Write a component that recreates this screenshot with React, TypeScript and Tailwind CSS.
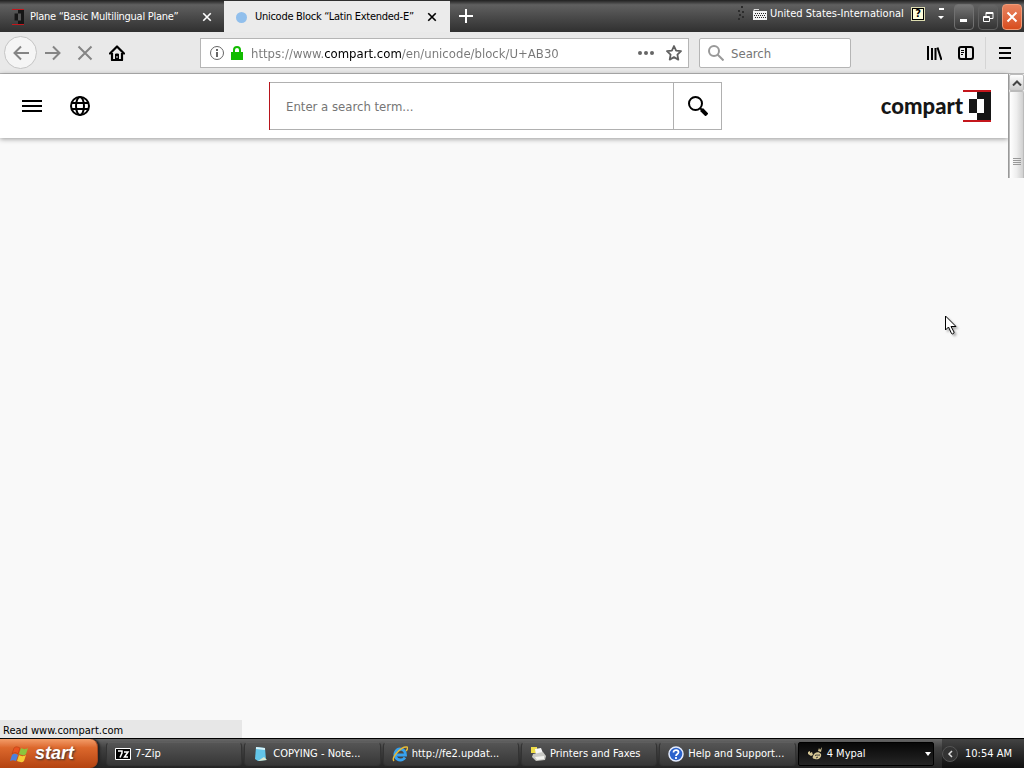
import React from "react";

const ui = "font-['DejaVu_Sans_Condensed','DejaVu_Sans',sans-serif]";

function CompartMark({ className, dark = false }: { className: string; dark?: boolean }) {
  return (
    <svg viewBox="0 0 28 32" className={className} preserveAspectRatio="none" aria-hidden="true">
      <path d="M14 2h14v28H14z" fill="#161616" />
      <path d="M6 9h8v14H6z" fill="#161616" />
      <path d="M14 9h7v14h-7z" fill={dark ? "#555" : "#fff"} />
      <path d="M0 0h28v2H0zM0 30h28v2H0z" fill="#c4161c" />
    </svg>
  );
}

function CloseGlyph({ className }: { className: string }) {
  return (
    <svg viewBox="0 0 12 12" className={className} fill="none" stroke="currentColor" strokeWidth="2" aria-hidden="true">
      <path d="M1.5 1.5l9 9M10.5 1.5l-9 9" />
    </svg>
  );
}

function TabStrip() {
  return (
    <header className="flex h-8 shrink-0 bg-linear-to-b from-[#202020] via-[#606060] via-15% to-[#303030] text-[11px] text-white">
      <div className="flex w-56 items-center pt-0.5 pl-3">
        <CompartMark dark className="mr-1.5 h-4 w-3" />
        <span className="flex-1 whitespace-nowrap tracking-tight">Plane “Basic Multilingual Plane”</span>
        <button aria-label="Close tab" className="mr-[11px] p-px"><CloseGlyph className="size-2.5" /></button>
      </div>
      <div className="flex w-[226px] items-center border-t border-[#303030] bg-[#ebebeb] pt-px pl-3 text-black">
        <span className="mr-2 size-[11px] rounded-full bg-[#91bfec]" />
        <span className="flex-1 whitespace-nowrap tracking-tight">Unicode Block “Latin Extended-E”</span>
        <button aria-label="Close tab" className="mr-3 p-px"><CloseGlyph className="size-2.5" /></button>
      </div>
      <button aria-label="New tab" className="flex w-8 items-center justify-center">
        <svg viewBox="0 0 14 14" className="size-3.5" stroke="currentColor" strokeWidth="2"><path d="M7 0v14M0 7h14" /></svg>
      </button>
      <div className="ml-auto flex">
        <div className="flex h-7 items-center">
          <svg viewBox="0 0 8 16" className="mr-2 h-4 w-2" fill="#2c2c2c"><path d="M4 0h2v2H4zM1 4h2v2H1zM5 5h2v2H5zM2 8h2v2H2zM5 10h2v2H5zM1 12h2v2H1z" /></svg>
          <svg viewBox="0 0 14 12" className="mr-[3px] h-3 w-3.5">
            <path d="M0 3h14v9H0z" fill="#f2f2f2" />
            <path d="M2 5.500h11M1 7.500h12M2 9.500h11" stroke="#222" strokeDasharray="1 1" />
            <path d="M1 3V1.500h5" stroke="#ddd" fill="none" />
          </svg>
          <span className="w-[132px] whitespace-nowrap">United States-International</span>
          <button aria-label="Help" className="ml-2.5 flex size-3 items-center justify-center border border-black bg-[#ffffdc] text-[11px] font-bold text-black outline outline-[#dcdcb0]">?</button>
          <button aria-label="Language bar options" className="mr-3.5 ml-3.5">
            <svg viewBox="0 0 6 14" className="h-3.5 w-1.5" fill="#fff"><path d="M1 1h5v2H1zM0 9h6l-3 3z" /></svg>
          </button>
        </div>
        <div className="-ml-1 flex h-[30px] items-center gap-1 pt-1 pr-0.5">
          <button aria-label="Minimize" className="flex h-[26px] w-5 items-center justify-center rounded-sm border border-[#707070] bg-linear-to-b from-[#777] to-[#343434]">
            <svg viewBox="0 0 12 12" className="size-3"><path d="M2 8h7v3H2z" fill="#fff" /></svg>
          </button>
          <button aria-label="Restore" className="flex h-[26px] w-5 items-center justify-center rounded-sm border border-[#606060] bg-linear-to-b from-[#666] to-[#343434]">
            <svg viewBox="0 0 12 12" className="size-3" fill="none" stroke="#fff"><path d="M4 5V1.500h7v6H8M1.500 5.500h6v5h-6zM4 2.500h7M1 6.500h7" /></svg>
          </button>
          <button aria-label="Close" className="flex h-[26px] w-5 items-center justify-center rounded-sm border border-[#f09a76] bg-linear-to-b from-[#e8835e] to-[#d84c1c]">
            <CloseGlyph className="size-3" />
          </button>
        </div>
      </div>
    </header>
  );
}

function Toolbar() {
  return (
    <nav className="flex h-[42px] shrink-0 items-center border-b border-[#b8b8b8] bg-[#e9e9e9] pl-1">
      <button aria-label="Back" className="flex size-[33px] items-center justify-center rounded-full border border-[#c5c5c5] bg-[#f5f5f5] text-[#858585]">
        <svg viewBox="0 0 16 16" className="size-4" fill="none" stroke="currentColor" strokeWidth="2"><path d="M16 8H1.500M8 1.500L1.500 8 8 14.500" /></svg>
      </button>
      <button aria-label="Forward" className="flex w-8 items-center justify-center text-[#858585]">
        <svg viewBox="0 0 16 16" className="size-4" fill="none" stroke="currentColor" strokeWidth="2"><path d="M0 8h14.500M8 1.500L14.500 8 8 14.500" /></svg>
      </button>
      <button aria-label="Stop" className="flex w-8 items-center justify-center text-[#858585]">
        <svg viewBox="0 0 16 16" className="size-4" fill="none" stroke="currentColor" strokeWidth="2"><path d="M1.500 1.500l13 13M14.500 1.500l-13 13" /></svg>
      </button>
      <button aria-label="Home" className="flex w-8 items-center justify-center text-black">
        <svg viewBox="0 0 16 16" className="size-4" fill="none" stroke="currentColor" strokeWidth="2.200" strokeLinejoin="round">
          <path d="M1 8.500L8 1.500l7 7" strokeLinecap="round" /><path d="M3 8v7h10V8" /><path d="M6.500 15V9h3v6z" fill="currentColor" strokeWidth="1" /><path d="M8 11v2" stroke="#e9e9e9" strokeWidth="1" />
        </svg>
      </button>
      <div className="ml-[67px] flex h-[30px] flex-1 items-center border border-[#b5b5b5] bg-white pr-1.5 pl-2">
        <button aria-label="Site information">
          <svg viewBox="0 0 16 16" className="size-4" fill="none" stroke="#666"><circle cx="8" cy="8" r="6.500" /><path d="M8 7v5" strokeWidth="2" /><path d="M8 4v2" strokeWidth="2" /></svg>
        </button>
        <svg viewBox="0 0 12 14" className="ml-1.5 h-3.5 w-3" aria-label="Secure connection"><path d="M0 6h12v8H0z" fill="#12bc00" /><path d="M3 7V4a3 3 0 016 0v3" fill="none" stroke="#12bc00" strokeWidth="2" /></svg>
        <input
          aria-label="Address"
          defaultValue="https://www.compart.com/en/unicode/block/U+AB30"
          className="ml-2 h-7 min-w-0 flex-1 bg-[linear-gradient(90deg,#777_0_74px,#000_74px_150px,#777_150px)] bg-clip-text pt-0.5 text-[13px] text-transparent caret-black outline-none"
        />
        <button aria-label="Page actions" className="mr-3">
          <svg viewBox="0 0 16 4" className="h-1 w-4" fill="#666"><circle cx="2" cy="2" r="2" /><circle cx="8" cy="2" r="2" /><circle cx="14" cy="2" r="2" /></svg>
        </button>
        <button aria-label="Bookmark this page">
          <svg viewBox="0 0 16 16" className="size-4" fill="none" stroke="#606060" strokeWidth="1.800" strokeLinejoin="round"><path d="M8 1l2.100 4.600 4.900.600-3.600 3.400.900 5L8 12.100l-4.300 2.500.900-5L1 6.200l4.900-.600z" /></svg>
        </button>
      </div>
      <label className="ml-2.5 flex h-[30px] w-[152px] items-center rounded-xs border border-[#b5b5b5] bg-white pl-2">
        <svg viewBox="0 0 16 16" className="size-4 shrink-0" fill="none" stroke="#999" strokeWidth="2"><circle cx="6" cy="6" r="5" /><path d="M9.500 9.500L15.500 15.500" /></svg>
        <input aria-label="Search" placeholder="Search" className="ml-[7px] min-w-0 flex-1 pt-0.5 text-[13px] outline-none placeholder:text-[#757575]" />
      </label>
      <div className="ml-[75px] flex items-center">
        <button aria-label="Library" className="mr-4">
          <svg viewBox="0 0 16 16" className="size-4" stroke="#000" strokeWidth="2"><path d="M2 1v14M6 3v12M9.500 3v12M11.500 2.500l4 12.500" /></svg>
        </button>
        <button aria-label="Sidebars" className="mr-[11px]">
          <svg viewBox="0 0 16 16" className="size-4" fill="none" stroke="#000" strokeWidth="2"><rect x="1" y="2" width="14" height="12" rx="2" /><path d="M8 2v12" /><path d="M3 5.500h3M3 7.500h3M3 9.500h2" strokeWidth="1" /></svg>
        </button>
        <span className="h-8 w-px bg-[#d5d5d5]" />
        <button aria-label="Menu" className="mx-3">
          <svg viewBox="0 0 14 14" className="size-3.5" stroke="#000" strokeWidth="2"><path d="M1 2h12M1 7h12M1 12h12" /></svg>
        </button>
      </div>
    </nav>
  );
}

function SiteHeader() {
  return (
    <header className="flex h-16 items-center bg-white pr-[17px] shadow-[0_1px_5px_rgba(0,0,0,0.4)]">
      <div className="flex w-[269px] shrink-0 items-center gap-7 pl-[22px]">
        <button aria-label="Menu">
          <svg viewBox="0 0 20 12" className="h-3 w-5" stroke="#000" strokeWidth="2"><path d="M0 1h20M0 6h20M0 11h20" /></svg>
        </button>
        <button aria-label="Language">
          <svg viewBox="0 0 20 20" className="size-5" fill="none" stroke="#000" strokeWidth="2"><circle cx="10" cy="10" r="9" /><ellipse cx="10" cy="10" rx="4" ry="9" /><path d="M2 7h16M2 13h16" /></svg>
        </button>
      </div>
      <form className="flex h-12 w-[453px] border-y border-r border-[#b0b0b0]">
        <span className="-my-px w-px bg-[#b8141c]" />
        <input aria-label="Enter a search term" placeholder="Enter a search term..." className="min-w-0 flex-1 px-4 pt-0.5 text-[13px] outline-none placeholder:text-[#757575]" />
        <button type="button" aria-label="Search" className="flex w-12 items-center justify-center border-l border-[#b0b0b0]">
          <svg viewBox="0 0 20 20" className="size-5" fill="none" stroke="#000"><circle cx="7.500" cy="7.500" r="6.500" strokeWidth="2" /><path d="M12 12l2 2" strokeWidth="2" /><path d="M13.500 13.500l5.500 5.500" strokeWidth="4" /></svg>
        </button>
      </form>
      <a href="#compart" className="ml-auto flex items-center">
        <span className="font-[Lato,sans-serif] text-[22px] leading-7 font-black text-[#161616]">compart</span>
        <CompartMark className="h-8 w-7" />
      </a>
    </header>
  );
}

function ScrollBar() {
  return (
    <div className="flex h-[104px] w-4 shrink-0 flex-col border-l border-[#999] bg-[#eee]">
      <button aria-label="Scroll up" className="flex h-[17px] items-center justify-center rounded-xs border border-[#bbb] bg-linear-to-b from-white to-[#ccc]">
        <svg viewBox="0 0 10 6" className="h-1.5 w-2.5" fill="none" stroke="#444" strokeWidth="2"><path d="M1 5.500l4-4 4 4" /></svg>
      </button>
      <div className="flex flex-1 flex-col items-center justify-end rounded-t-xs border border-b-0 border-[#bbb] bg-linear-to-r from-white via-[#eee] to-[#d0d0d0] pb-3">
        <svg viewBox="0 0 8 8" className="size-2" stroke="#999"><path d="M0 .5h8M0 2.500h8M0 4.500h8M0 6.500h8" /></svg>
      </div>
    </div>
  );
}

const icons: Record<string, React.ReactNode> = {
  zip: <svg viewBox="0 0 16 12" className="h-3 w-4 shrink-0"><path d="M.5.500h15v11H.5z" fill="#000" stroke="#fff" /><path d="M3 3h4v2L5 9.500M9 4h4L9.500 9H13" fill="none" stroke="#fff" strokeWidth="1.500" /></svg>,
  note: <svg viewBox="0 0 16 16" className="size-4 shrink-0"><path d="M3 1l9 1 1 12-8 1-3-2z" fill="#63c5e8" /><path d="M3 1l9 1v2L3 3z" fill="#d4f3fb" /><path d="M5 15l9-1-3-3z" fill="#dce9d0" /></svg>,
  ie: <svg viewBox="0 0 16 16" className="size-4 shrink-0" fill="none"><path d="M13 11.500A5.500 5.500 0 118 3c3.500 0 5.500 2.500 5.500 6H4" stroke="#37a2ef" strokeWidth="2.800" /><path d="M2 15C-1 12 9 0 15 1c1 1 0 3-1 4" stroke="#e7bb35" strokeWidth="1.500" /></svg>,
  printer: <svg viewBox="0 0 16 16" className="size-4 shrink-0"><path d="M1 1h6v6H1z" fill="#eedc48" /><path d="M5 3l6-1 2 5-7 2z" fill="#f7f7f7" /><path d="M3 8l10-2 3 4-1 4-9 1-4-4z" fill="#c9c9c4" /><path d="M5 11l9-1v3l-7 1z" fill="#f3f3ee" /></svg>,
  help: <svg viewBox="0 0 16 16" className="size-4 shrink-0"><circle cx="8" cy="8" r="7" fill="#2a62cc" stroke="#e4ecff" strokeWidth="1.500" /><path d="M5.500 6.500C5.500 3 11 3.500 10.500 6.500 10.300 8 8 8 8 10M8 11v2" fill="none" stroke="#fff" strokeWidth="1.800" /></svg>,
  mypal: <svg viewBox="0 0 16 16" className="size-4 shrink-0"><path d="M1 6l2-1v2l2-1 1 3-2 1-3-2zM6 10c1-4 6-5 8-2 1 4-3 6-6 5-2 0-3-1-2-3zM11 5l1-3 1 2 2-3-1 5z" fill="#d6c795" /><path d="M8 9.500c2-1 3 0 5-.5M9 12l2-1" fill="none" stroke="#333" /></svg>,
};

const tasks = [
  { icon: "zip", label: "7-Zip" },
  { icon: "note", label: "COPYING - Note..." },
  { icon: "ie", label: "http://fe2.updat..." },
  { icon: "printer", label: "Printers and Faxes" },
  { icon: "help", label: "Help and Support..." },
];

function TaskBar() {
  return (
    <footer className="flex h-[30px] shrink-0 items-center border-t border-black bg-linear-to-b from-[#686868] via-[#414141] via-30% to-[#242424] text-[11px] text-white">
      <button className="mr-2 flex h-full w-[98px] shrink-0 items-center rounded-r-lg border-r border-[#a54620] bg-linear-to-b from-[#f39d68] via-[#dc682c] via-30% to-[#b44310] pl-2.5 shadow-[2px_0_2px_#222]">
        <svg viewBox="0 0 20 18" className="h-[18px] w-5">
          <path d="M4 3c2-2 4-1 6 0L8 9C6 7 4 7 2 9z" fill="#e8531f" stroke="#a83a14" strokeWidth=".5" /><path d="M11 3c2 1 4 2 7 0l-2 6c-2 2-4 1-7 0z" fill="#8cc43d" />
          <path d="M2 10c2-2 4-1 6 0l-2 6c-2-1-4-1-6 0z" fill="#4b80dc" /><path d="M9 10c2 1 4 2 7 0l-2 6c-2 2-4 1-7 0z" fill="#f5ca35" />
        </svg>
        <span className="ml-[5px] pb-0.5 font-['Liberation_Sans',sans-serif] text-[18px] leading-6 font-bold italic [text-shadow:1px_1px_2px_#333]">start</span>
      </button>
      <div className="grid min-w-0 flex-1 grid-cols-6 gap-0.5">
        {tasks.map((task) => (
          <button key={task.label} className="flex h-6 min-w-0 items-center gap-1 overflow-hidden rounded-sm border border-[#333] border-t-[#5e5e5e] bg-linear-to-b from-[#555] to-[#373737] pt-px pl-2 whitespace-nowrap">
            {icons[task.icon]}<span>{task.label}</span>
          </button>
        ))}
        <button className="flex h-6 min-w-0 items-center gap-1 rounded-xs border border-black bg-linear-to-b from-[#080808] to-[#252525] pt-px pr-0.5 pl-2 whitespace-nowrap">
          {icons.mypal}<span>4 Mypal</span>
          <svg viewBox="0 0 6 4" className="ml-auto h-1 w-1.5" fill="#fff"><path d="M0 0h6L3 4z" /></svg>
        </button>
      </div>
      <div className="ml-2 flex h-full w-[82px] shrink-0 items-center bg-linear-to-b from-[#444] to-[#101010]">
        <button aria-label="Show hidden icons" className="flex size-4 shrink-0 items-center justify-center rounded-full border border-[#555] bg-[#333]">
          <svg viewBox="0 0 6 8" className="h-2 w-1.5" fill="none" stroke="#ddd" strokeWidth="1.500"><path d="M5 1L2 4l3 3" /></svg>
        </button>
        <time className="ml-[7px] pt-px whitespace-nowrap">10:54 AM</time>
      </div>
    </footer>
  );
}

export default function App() {
  return (
    <div className={`relative flex min-h-screen flex-col bg-[#f9f9f9] ${ui}`}>
      <TabStrip />
      <Toolbar />
      <main className="relative flex flex-1 items-start">
        <div className="min-w-0 flex-1"><SiteHeader /></div>
        <ScrollBar />
        <div role="status" className="absolute bottom-0 left-0 h-[18px] w-[242px] bg-[#e7e7e7] pl-[3px] text-[11px] leading-[22px] text-black">Read www.compart.com</div>
      </main>
      <TaskBar />
      <svg viewBox="0 0 13 20" className="absolute top-[315px] left-[945px] h-5 w-[13px] drop-shadow-[2px_2px_1px_rgba(0,0,0,0.3)]" aria-hidden="true">
        <path d="M.5 1v14l3-3 3 6.500c1 1 3 0 2.500-1.500L6 11.500h5z" fill="#fff" stroke="#000" />
      </svg>
    </div>
  );
}
